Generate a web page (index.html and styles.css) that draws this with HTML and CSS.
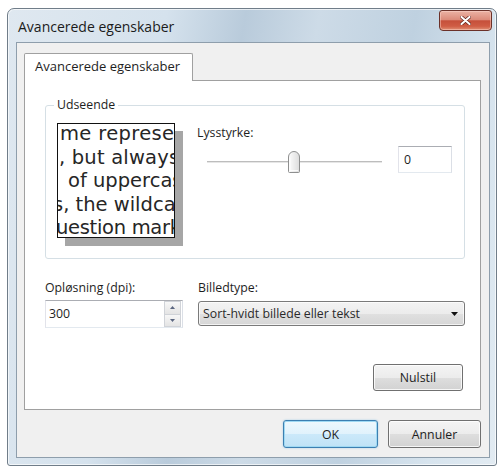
FILE: index.html
```html
<!DOCTYPE html>
<html lang="da">
<head>
<meta charset="utf-8">
<title>Avancerede egenskaber</title>
<link rel="stylesheet" href="styles.css">
</head>
<body>
<div class="window">
  <div class="titlebar">
    <span class="title">Avancerede egenskaber</span>
    <button class="close" aria-label="Luk">
      <svg width="11" height="9" viewBox="0 0 11 9"><path d="M1.5 1 L9.5 8 M9.5 1 L1.5 8" stroke="#5b1a12" stroke-width="3.4" stroke-linecap="round"/><path d="M1.5 1 L9.5 8 M9.5 1 L1.5 8" stroke="#fff" stroke-width="2.2" stroke-linecap="round"/></svg>
    </button>
  </div>
  <div class="client">
    <div class="tabs"><div class="tab">Avancerede egenskaber</div></div>
    <div class="panel">
      <fieldset class="group">
        <legend>Udseende</legend>
        <div class="preview">
          <div class="line l1">me represent</div>
          <div class="line l2">, but always</div>
          <div class="line l3">of uppercase</div>
          <div class="line l4">s, the wildcard</div>
          <div class="line l5">uestion mark</div>
        </div>
        <div class="brightness">
          <div class="label">Lysstyrke:</div>
          <div class="brightness-row">
            <div class="slider">
              <div class="track"></div>
              <svg class="thumb" width="14" height="23" viewBox="0 0 14 23">
                <defs><linearGradient id="thumbFill" x1="0" y1="0" x2="1" y2="0"><stop offset="0" stop-color="#fdfdfd"/><stop offset="1" stop-color="#dcdcdc"/></linearGradient></defs>
                <path d="M1.5 21.5 V7 A5.5 5.5 0 0 1 12.5 7 V21.5 Q12.5 22.5 11.5 22.5 H2.5 Q1.5 22.5 1.5 21.5 Z" fill="url(#thumbFill)" stroke="#8e8f8f"/>
                <path d="M3 8 V20.5 H11" fill="none" stroke="#ffffff" stroke-width="0.8"/>
              </svg>
            </div>
            <div class="textbox value">0</div>
          </div>
        </div>
      </fieldset>
      <div class="fields">
        <div class="field">
          <div class="label">Opløsning (dpi):</div>
          <div class="textbox spin">
            <span class="spin-text">300</span>
            <div class="spin-buttons">
              <span class="spin-btn"><svg width="5" height="3" viewBox="0 0 5 3"><path d="M0 3 L2.5 0 L5 3 Z" fill="#5a6680"/></svg></span>
              <span class="spin-btn"><svg width="5" height="3" viewBox="0 0 5 3"><path d="M0 0 L2.5 3 L5 0 Z" fill="#5a6680"/></svg></span>
            </div>
          </div>
        </div>
        <div class="field">
          <div class="label">Billedtype:</div>
          <div class="combo">
            <span class="combo-text">Sort-hvidt billede eller tekst</span>
            <svg class="combo-arrow" width="7" height="4" viewBox="0 0 7 4"><path d="M0 0 H7 L3.5 4 Z" fill="#111"/></svg>
          </div>
        </div>
      </div>
      <div class="reset-row"><button class="btn reset">Nulstil</button></div>
    </div>
    <div class="actions">
      <button class="btn default ok">OK</button>
      <button class="btn cancel">Annuler</button>
    </div>
  </div>
</div>
</body>
</html>
```
FILE: styles.css
```css
body {
  margin: 0;
  background: #ffffff;
  font-family: "Open Sans", "Liberation Sans", sans-serif;
  font-size: 12.3px;
  color: #1e1e1e;
}

/* Glass window frame */
.window {
  box-sizing: border-box;
  width: 490px;
  height: 458px;
  margin: 8px 0 0 7px;
  border: 1px solid #707d89;
  border-radius: 7px 7px 3px 3px;
  padding: 0 6px 7px 8px;
  display: flex;
  flex-direction: column;
  background: linear-gradient(100deg, #dfe8f0 0%, #d5e2ed 28%, #b9cbdb 42%, #cddbe7 55%, #bfd1e0 72%, #d7e4ee 88%, #e2ebf2 100%);
  box-shadow: inset 0 0 0 1px rgba(255, 255, 255, 0.65);
}

.titlebar {
  height: 33px;
  flex: none;
  display: flex;
  justify-content: space-between;
  align-items: flex-start;
}

.title {
  margin: 9px 0 0 2px;
  font-size: 14px;
  line-height: 18px;
  color: #1b1b1b;
}

.close {
  box-sizing: border-box;
  width: 53px;
  height: 21px;
  margin: 1px -2px 0 0;
  padding: 0;
  border: 1px solid #6b3129;
  border-radius: 3px 3px 4px 4px;
  background: linear-gradient(#ebb2a4 0%, #dc8c7b 45%, #c6503b 52%, #cf5d45 80%, #e08f74 100%);
  box-shadow: inset 0 0 0 1px rgba(255, 220, 210, 0.45);
  display: flex;
  align-items: center;
  justify-content: center;
}

/* Dialog client area */
.client {
  flex: 1;
  background: #f0f0f0;
  border: 1px solid #8e9eac;
  padding: 10px 8px 0 7px;
  display: flex;
  flex-direction: column;
}

.tabs {
  height: 27px;
  flex: none;
  display: flex;
  position: relative;
  z-index: 1;
}

.tab {
  box-sizing: border-box;
  width: 169px;
  height: 28px;
  padding: 4px 0 0 10px;
  border: 1px solid #a0a0a0;
  border-bottom: none;
  border-radius: 2px 2px 0 0;
  background: #ffffff;
  font-size: 13px;
  line-height: 17px;
}

.panel {
  box-sizing: border-box;
  height: 330px;
  flex: none;
  border: 1px solid #a0a0a0;
  background: #ffffff;
  padding-left: 20px;
  display: flex;
  flex-direction: column;
}

/* "Udseende" group */
.group {
  margin: 16px 15px 0 0;
  padding: 10px 11px 20px 11px;
  border: 1px solid #d5dfe5;
  border-radius: 3px;
  display: flex;
  min-width: 0;
}

.group legend {
  padding: 0 3px;
  margin-left: -3px;
  line-height: 16px;
}

.preview {
  box-sizing: border-box;
  width: 118px;
  height: 115px;
  flex: none;
  border: 1px solid #111111;
  background: #ffffff;
  overflow: hidden;
  box-shadow: 8px 8px 0 #a6a6a6;
  font-family: "DejaVu Sans", Verdana, sans-serif;
  font-size: 19.5px;
  line-height: 23.5px;
  color: #262626;
}

.line { white-space: nowrap; }
.l1 { margin-top: -2px; padding-left: 2px; letter-spacing: 0.35px; }
.l2 { padding-left: 1px; letter-spacing: 0.2px; }
.l3 { padding-left: 10px; }
.l4 { margin-left: -5px; }
.l5 { margin-left: -2px; letter-spacing: -0.3px; }

.brightness {
  flex: 1;
  margin-left: 22px;
  display: flex;
  flex-direction: column;
}

.label { line-height: 16px; }

.brightness .label { margin-top: 2px; }

.brightness-row {
  display: flex;
  align-items: flex-start;
  margin-top: 5px;
}

.slider {
  position: relative;
  width: 183px;
  height: 27px;
  margin-left: 6px;
}

.track {
  height: 1px;
  margin: 15px 4px 0;
  background: #bdbdbd;
  border-bottom: 1px solid #e6e6e6;
}

.thumb {
  position: absolute;
  left: 84px;
  top: 4px;
}

.textbox {
  box-sizing: border-box;
  background: #ffffff;
  border: 1px solid;
  border-color: #abadb3 #dbdfe6 #e3e9ef #e2e3ea;
}

.value {
  width: 54px;
  height: 27px;
  margin-left: 12px;
  padding-left: 5px;
  line-height: 25px;
}

/* Resolution and image type */
.fields {
  display: grid;
  grid-template-columns: 138px 267px;
  column-gap: 15px;
  margin-top: 21px;
}

.spin {
  height: 28px;
  margin-top: 4px;
  display: flex;
  align-items: stretch;
}

.spin-text {
  flex: 1;
  padding-left: 3px;
  line-height: 26px;
}

.spin-buttons {
  width: 17px;
  margin: 0 1px 0 0;
  display: flex;
  flex-direction: column;
}

.spin-btn {
  flex: 1;
  box-sizing: border-box;
  border: 1px solid #d0d3d8;
  background: linear-gradient(#f7f7f7, #e4e4e4);
  display: flex;
  align-items: center;
  justify-content: center;
}

.spin-btn + .spin-btn { border-top: none; }

.combo {
  box-sizing: border-box;
  height: 25px;
  margin-top: 5px;
  padding: 0 6px 0 4px;
  border: 1px solid #7a7a7a;
  border-radius: 3px;
  background: linear-gradient(#f3f3f3 0%, #ececec 50%, #e0e0e0 51%, #d6d6d6 100%);
  box-shadow: inset 0 0 0 1px rgba(255, 255, 255, 0.7);
  display: flex;
  align-items: center;
  justify-content: space-between;
}

.combo-text { font-size: 12.3px; color: #2a2a2a; }

/* Push buttons */
.btn {
  box-sizing: border-box;
  height: 28px;
  padding: 0;
  border: 1px solid #707070;
  border-radius: 3px;
  background: linear-gradient(#f4f4f4 0%, #ececec 50%, #dedede 51%, #d2d2d2 100%);
  box-shadow: inset 0 0 0 1px rgba(255, 255, 255, 0.8);
  font: inherit;
  color: #1e1e1e;
}

.reset-row {
  display: flex;
  justify-content: flex-end;
  margin: 36px 17px 0 0;
}

.reset { width: 90px; height: 27px; }

.actions {
  display: flex;
  justify-content: flex-end;
  gap: 10px;
  margin-top: 10px;
}

.ok { width: 95px; }
.cancel { width: 93px; }

.btn.default {
  border-color: #3c7fb1;
  background: linear-gradient(#eef8fd 0%, #e0f2fc 50%, #cbe9fa 51%, #bfe2f6 100%);
  box-shadow: inset 0 0 0 1px #9fd9f3, 0 0 2px rgba(60, 160, 220, 0.45);
}
```
